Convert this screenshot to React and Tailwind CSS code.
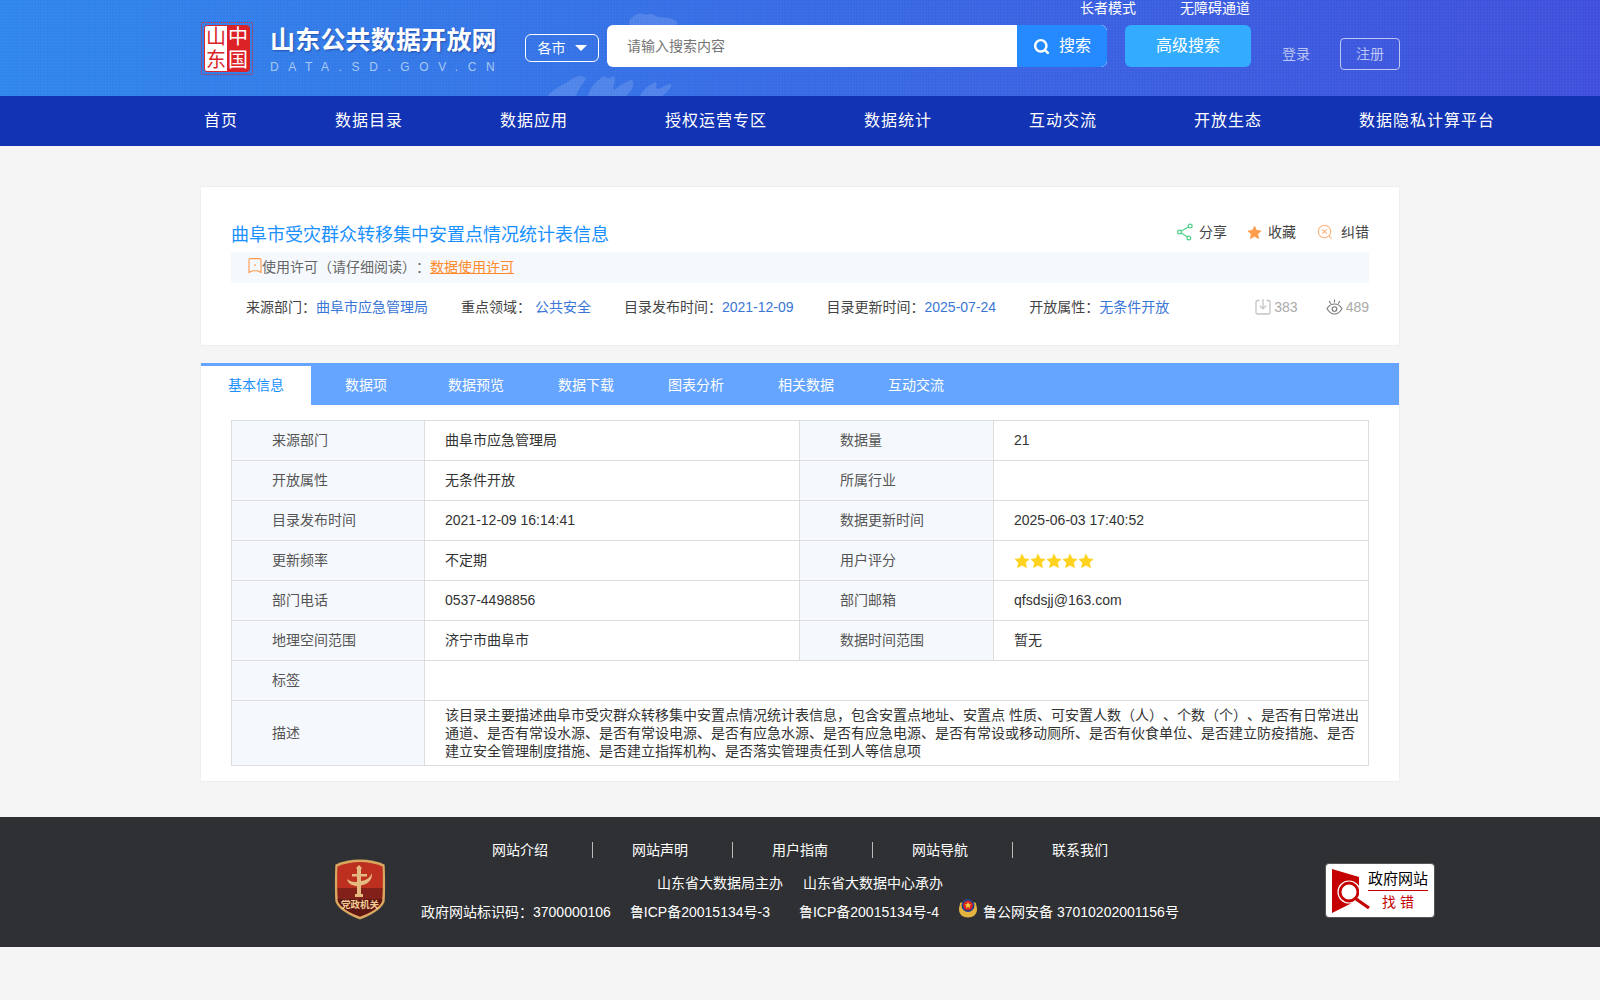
import React from "react";
import { Search } from "lucide-react";

function Caret() {
  return <span className="ml-[9px] inline-block h-0 w-0 border-x-[6px] border-t-[6px] border-x-transparent border-t-white" />;
}

function Seal() {
  return (
    <div className="relative h-[53px] w-[52px] rounded-[2px] border border-dotted border-[#d8242a] p-[2px]">
      <div className="grid h-full w-full grid-cols-2 overflow-hidden rounded-[3px] border border-[#d8242a] leading-none">
        <div className="flex flex-col items-center justify-around bg-white text-[20px] text-[#d8242a]">
          <span>山</span>
          <span>东</span>
        </div>
        <div className="flex flex-col items-center justify-around bg-[#dc2127] text-[20px] text-white">
          <span>中</span>
          <span>国</span>
        </div>
      </div>
    </div>
  );
}

function Globe() {
  return (
    <svg className="pointer-events-none absolute left-[330px] top-[8px]" width="180" height="88" viewBox="0 0 180 88" fill="#ffffff">
      <g opacity="0.13">
        <path d="M100 12c4-6 10-8 16-5 5-3 8 0 12 2 6 0 14 1 18 4 2 2 1 4 0 6H102c-3-2-4-5-2-7z" />
        <path d="M18 88c4-6 12-10 20-14 6-6 14-8 18-4-2 6-8 10-10 18z" />
        <path d="M58 88c2-10 10-16 16-20 4 4 6 2 10 0 3 6-2 10 0 14 6-4 10-8 18-10 4 6-2 12-6 16z" />
        <path d="M110 88c4-8 10-12 16-14 2 4-2 6 2 7 6-2 8-5 14-5-1 5-6 9-10 12z" />
      </g>
    </svg>
  );
}

function ShareIcon() {
  return (
    <svg width="16" height="18" viewBox="0 0 16 18" fill="none" stroke="#4fd08a" strokeWidth="1.2">
      <circle cx="13.2" cy="3" r="1.9" />
      <circle cx="2.6" cy="9" r="1.9" />
      <circle cx="11.8" cy="15" r="1.9" />
      <path d="M11.6 4 4.2 8M4.2 10l6 3.8" />
    </svg>
  );
}

function Star({ color, size }) {
  return (
    <svg width={size} height={size} viewBox="0 0 16 16" fill={color} stroke={color} strokeLinejoin="round" strokeWidth="0.8">
      <path d="M8 1.2l2.1 4.5 4.9.6-3.6 3.3 1 4.900L8 12.100l-4.400 2.400 1-4.900L1 6.300l4.900-.6z" />
    </svg>
  );
}

function ErrorIcon() {
  return (
    <svg width="16" height="16" viewBox="0 0 16 16" fill="none" stroke="#ffb37a" strokeWidth="1.1">
      <circle cx="7.5" cy="7.5" r="6.2" />
      <path d="M5.3 5.3l4.4 4.4M9.7 5.3l-4.4 4.4M12 12l2.6 2.6" />
    </svg>
  );
}

function BookmarkIcon() {
  return (
    <svg width="14" height="16" viewBox="0 0 14 16" fill="none" stroke="#ff9a4d" strokeWidth="1.1">
      <path d="M1 2a1.4 1.4 0 0 1 1.4-1.4h9.2A1.4 1.4 0 0 1 13 2v12.600l-3.400-1.800H4.400L1 14.600z" />
      <path d="M7 6v2.2" />
    </svg>
  );
}

function DownloadIcon() {
  return (
    <svg width="16" height="18" viewBox="0 0 16 18" fill="none" stroke="#c4c4c4" strokeWidth="1.3">
      <path d="M4.500 2.500H2.400A1.400 1.400 0 0 0 1 3.900v10.700A1.400 1.400 0 0 0 2.400 16h11.200a1.400 1.400 0 0 0 1.400-1.400V3.900a1.400 1.400 0 0 0-1.400-1.400h-2.100" />
      <path d="M8 1v9.500M4.800 7.600 8 10.800l3.200-3.200" />
    </svg>
  );
}

function EyeIcon() {
  return (
    <svg width="17" height="18" viewBox="0 0 17 18" fill="none" stroke="#777777" strokeWidth="1.1">
      <path d="M1 10.500C3 7.300 5.500 6 8.500 6s5.500 1.300 7.500 4.500C14 14.300 11.500 16 8.500 16S3 14.300 1 10.500z" />
      <circle cx="8.500" cy="11" r="2.300" />
      <path d="M8.500 1.500v3M3.200 3l1.600 2.800M13.800 3l-1.600 2.800" />
    </svg>
  );
}

function PartyBadge() {
  return (
    <div className="relative h-[63px] w-[52px]">
      <svg width="52" height="63" viewBox="0 0 52 63">
        <path d="M26 1.500C35 1.500 43 3 50.500 6.500 51 8 51.500 36 50.500 44 48 51 36 58 26 61.500 16 58 4 51 1.500 44 .5 36 1 8 1.500 6.500 9 3 17 1.500 26 1.500z" fill="#d9a860" />
        <path d="M26 4C34 4 42 5.500 48.500 8.500 49 12 49 36 48 43 46 49 36 55 26 58.500 16 55 6 49 4 43 3 36 3 12 3.500 8.500 10 5.500 18 4 26 4z" fill="#bd3020" />
        <path d="M3.500 30H48.500L48 43C46 49 36 55 26 58.500 16 55 6 49 4 43z" fill="#84201a" />
        <path d="M3.500 41H48.200L48 43C46 49 36 55 26 58.500 16 55 6 49 4 43z" fill="#5d1712" />
        <path d="M22 10l3-3 3 3-1 1v5h6v2.500h-6V23c5-.5 9-3 11-8 .5 7-4 11-11 12.500V36h2v3H21v-3h2V28c-4 0-9-2-10-7 3 2.500 6 3 10 3V18.500h-5V16h5v-5z" fill="#e5ba80" />
      </svg>
      <span className="absolute left-0 top-[41px] w-full whitespace-nowrap text-center text-[9.5px] font-bold leading-[12px] text-[#f1cc95]">党政机关</span>
    </div>
  );
}

function PoliceEmblem() {
  return (
    <svg width="20" height="21" viewBox="0 0 20 21">
      <path d="M10 20.500c-5 0-9-3-9-8 0-3 1-4 1-6.500l3-1c1-3.500 8-3.500 10 0l3 1c0 2.500 1 3.500 1 6.500 0 5-4 8-9 8z" fill="#e4b340" />
      <circle cx="10" cy="8.500" r="6.500" fill="#1d3d8f" />
      <circle cx="10" cy="8.500" r="4.800" fill="#d8261f" />
      <path d="M10 5l1 2.200 2.300.2-1.800 1.500.6 2.300-2.100-1.200-2.100 1.200.6-2.300-1.800-1.500 2.300-.2z" fill="#f6d24a" />
    </svg>
  );
}

function FindError() {
  return (
    <div className="flex h-[55px] w-[110px] items-center rounded-[4px] border border-[#555555] bg-white pl-[6px]">
      <svg width="38" height="44" viewBox="0 0 38 44" className="shrink-0">
        <path d="M0 0 27 8V30L18 35 0 44z" fill="#c40000" />
        <circle cx="17" cy="23" r="8.800" fill="#ffffff" stroke="#c40000" strokeWidth="2.500" />
        <circle cx="17" cy="23" r="11" fill="none" stroke="#ffffff" strokeWidth="1.200" />
        <path d="M24 30 37 39" stroke="#c40000" strokeWidth="3.200" />
      </svg>
      <div className="-ml-[2px] flex w-[60px] flex-col items-center">
        <div className="w-full whitespace-nowrap border-b border-[#c40000] pb-[1px] text-center text-[15px] leading-[20px] text-black">政府网站</div>
        <div className="mt-[1px] pl-[4px] text-[14px] leading-[20px] tracking-[4px] text-[#c40000]">找错</div>
      </div>
    </div>
  );
}

const navItems = ["首页", "数据目录", "数据应用", "授权运营专区", "数据统计", "互动交流", "开放生态", "数据隐私计算平台"];
const tabs = ["基本信息", "数据项", "数据预览", "数据下载", "图表分析", "相关数据", "互动交流"];
const footLinks = [
  ["网站介绍", "w-[141px] border-r border-[#bbbbbb] pl-[40px]"],
  ["网站声明", "w-[140px] border-r border-[#bbbbbb] pl-[39px]"],
  ["用户指南", "w-[140px] border-r border-[#bbbbbb] pl-[39px]"],
  ["网站导航", "w-[140px] border-r border-[#bbbbbb] pl-[39px]"],
  ["联系我们", "w-[135px] pl-[39px]"],
];

function Label({ children }) {
  return <td className="border border-[#dddddd] bg-[#f5f9fd] pl-[40px] text-[14px] text-[#555555]">{children}</td>;
}
function Value({ children, colSpan }) {
  return <td colSpan={colSpan} className="border border-[#dddddd] pl-[20px] text-[14px] text-[#333333]">{children}</td>;
}

export default function App() {
  return (
    <div className="min-h-[1000px] bg-[#f5f5f5] font-['Liberation_Sans','Noto_Sans_CJK_SC',sans-serif] [text-spacing-trim:space-all]">
      <header className="h-[96px] bg-[repeating-linear-gradient(0deg,rgba(255,255,255,0.025)_0_1px,transparent_1px_3px),repeating-linear-gradient(90deg,rgba(255,255,255,0.025)_0_1px,transparent_1px_3px),linear-gradient(90deg,#2f86ec,#3f4fdc)]">
        <div className="relative mx-auto flex w-[1200px]">
          <Globe />
          <div className="relative flex w-[325px] pt-[22px] pl-[1px]">
            <Seal />
            <div className="ml-[17px]">
              <div className="whitespace-nowrap text-[25px] font-bold leading-[36px] tracking-[0.2px] text-white [text-shadow:1px_1px_2px_rgba(0,0,60,0.35)]">山东公共数据开放网</div>
              <div className="mt-[2px] whitespace-nowrap text-[12px] leading-[14px] tracking-[9.6px] text-[#a9c8f2]">DATA.SD.GOV.CN</div>
            </div>
          </div>
          <div className="relative flex-1">
            <div className="flex h-[25px] justify-end gap-[44px] pr-[150px] text-[14px] leading-[16px] text-white">
              <span>长者模式</span>
              <span>无障碍通道</span>
            </div>
            <div className="flex items-start">
              <div className="mt-[9px] flex h-[28px] w-[74px] items-center justify-center rounded-[6px] border border-white text-[14px] text-white">
                各市
                <Caret />
              </div>
              <div className="ml-[8px] flex h-[42px] w-[500px] overflow-hidden rounded-[6px] bg-white">
                <div className="flex-1 pl-[20px] text-[14px] leading-[42px] text-[#757575]">请输入搜索内容</div>
                <div className="flex w-[90px] items-center justify-center rounded-r-[6px] bg-[#2589ff] text-[16px] text-white">
                  <Search size={17} strokeWidth={3.5} />
                  <span className="ml-[9px]">搜索</span>
                </div>
              </div>
              <div className="ml-[18px] flex h-[42px] w-[126px] items-center justify-center rounded-[6px] bg-[#33acff] text-[16px] text-white">高级搜索</div>
              <div className="ml-[31px] mt-[20px] text-[14px] leading-[18px] text-[#bcc6f2]">登录</div>
              <div className="ml-[30px] mt-[13px] flex h-[32px] w-[60px] items-center justify-center rounded-[4px] border border-[#bcc6f2] text-[14px] text-[#bcc6f2]">注册</div>
            </div>
          </div>
        </div>
      </header>

      <nav className="h-[50px] bg-[#1233b3]">
        <div className="mx-auto flex w-[1200px] gap-[97px] pl-[4px] text-[16px] leading-[50px] tracking-[1px] text-white">
          {navItems.map((n) => (
            <span key={n} className="whitespace-nowrap">{n}</span>
          ))}
        </div>
      </nav>

      <main className="mx-auto w-[1200px] pt-[40px]">
        <section className="h-[160px] border border-[#eeeeee] bg-white px-[30px] pt-[34px]">
          <div className="flex items-start justify-between">
            <h1 className="pt-[1px] text-[18px] font-normal leading-[27px] text-[#1890ff]">曲阜市受灾群众转移集中安置点情况统计表信息</h1>
            <div className="flex items-center text-[14px] leading-[22px] text-[#444444]">
              <ShareIcon />
              <span className="ml-[6px]">分享</span>
              <span className="ml-[20px]"><Star color="#ff9d4d" size={15} /></span>
              <span className="ml-[6px]">收藏</span>
              <span className="ml-[21px]"><ErrorIcon /></span>
              <span className="ml-[8px]">纠错</span>
            </div>
          </div>
          <div className="mt-[3px] flex h-[31px] items-center bg-[#f5f9fd] pl-[17px] text-[14px] text-[#666666]">
            <span className="-mt-[3px]"><BookmarkIcon /></span>
            <span>使用许可（请仔细阅读）：</span>
            <a className="text-[#ff8a2b] underline">数据使用许可</a>
          </div>
          <div className="mt-[14px] flex h-[20px] items-center gap-[33px] pl-[15px] text-[14px] text-[#444444]">
            <span>来源部门：<span className="text-[#3a76d6]">曲阜市应急管理局</span></span>
            <span>重点领域： <span className="text-[#3a76d6]">公共安全</span></span>
            <span>目录发布时间：<span className="text-[#3a76d6]">2021-12-09</span></span>
            <span>目录更新时间：<span className="text-[#3a76d6]">2025-07-24</span></span>
            <span>开放属性：<span className="text-[#3a76d6]">无条件开放</span></span>
            <div className="ml-auto flex items-center text-[#aaaaaa]">
              <DownloadIcon />
              <span className="ml-[3px]">383</span>
              <span className="ml-[28px]"><EyeIcon /></span>
              <span className="ml-[3px]">489</span>
            </div>
          </div>
        </section>

        <section className="mt-[17px] h-[419px] border-x border-b border-[#eeeeee] bg-white">
          <div className="flex h-[42px] bg-[#66a5ff] text-[14px] text-white">
            {tabs.map((t, i) =>
              i === 0 ? (
                <div key={t} className="mt-[3px] flex h-[39px] w-[110px] items-center justify-center bg-white text-[#1890ff]">{t}</div>
              ) : (
                <div key={t} className="flex h-[42px] w-[110px] items-center justify-center pt-[2px]">{t}</div>
              )
            )}
          </div>
          <div className="mt-[15px] px-[30px]">
            <table className="w-full table-fixed border-collapse">
              <colgroup>
                <col className="w-[193px]" />
                <col className="w-[375px]" />
                <col className="w-[194px]" />
                <col className="w-[375px]" />
              </colgroup>
              <tbody>
                <tr className="h-[40px]"><Label>来源部门</Label><Value>曲阜市应急管理局</Value><Label>数据量</Label><Value>21</Value></tr>
                <tr className="h-[40px]"><Label>开放属性</Label><Value>无条件开放</Value><Label>所属行业</Label><Value></Value></tr>
                <tr className="h-[40px]"><Label>目录发布时间</Label><Value>2021-12-09 16:14:41</Value><Label>数据更新时间</Label><Value>2025-06-03 17:40:52</Value></tr>
                <tr className="h-[40px]">
                  <Label>更新频率</Label><Value>不定期</Value><Label>用户评分</Label>
                  <Value>
                    <div className="flex">
                      {[0, 1, 2, 3, 4].map((i) => (
                        <Star key={i} color="#ffd21e" size={16} />
                      ))}
                    </div>
                  </Value>
                </tr>
                <tr className="h-[40px]"><Label>部门电话</Label><Value>0537-4498856</Value><Label>部门邮箱</Label><Value>qfsdsjj@163.com</Value></tr>
                <tr className="h-[40px]"><Label>地理空间范围</Label><Value>济宁市曲阜市</Value><Label>数据时间范围</Label><Value>暂无</Value></tr>
                <tr className="h-[40px]"><Label>标签</Label><Value colSpan={3}></Value></tr>
                <tr className="h-[65px]">
                  <Label>描述</Label>
                  <Value colSpan={3}>
                    <div className="pr-[8px] leading-[18px]">该目录主要描述曲阜市受灾群众转移集中安置点情况统计表信息，包含安置点地址、安置点 性质、可安置人数（人）、个数（个）、是否有日常进出通道、是否有常设水源、是否有常设电源、是否有应急水源、是否有应急电源、是否有常设或移动厕所、是否有伙食单位、是否建立防疫措施、是否建立安全管理制度措施、是否建立指挥机构、是否落实管理责任到人等信息项</div>
                  </Value>
                </tr>
              </tbody>
            </table>
          </div>
        </section>
      </main>

      <footer className="mt-[35px] flex h-[130px] bg-[#2e3033] pl-[334px] text-[14px] text-white">
        <div className="mt-[41px]"><PartyBadge /></div>
        <div className="ml-[34px] w-[760px]">
          <div className="mt-[25px] flex h-[16px] items-center justify-center leading-[16px]">
            {footLinks.map(([l, c]) => (
              <span key={l} className={c}>{l}</span>
            ))}
          </div>
          <div className="mt-[15px] flex h-[20px] items-center justify-center gap-[20px]">
            <span>山东省大数据局主办</span>
            <span>山东省大数据中心承办</span>
          </div>
          <div className="mt-[9px] flex h-[20px] items-center whitespace-nowrap pl-[1px]">
            <span>政府网站标识码：3700000106</span>
            <span className="ml-[19px]">鲁ICP备20015134号-3</span>
            <span className="ml-[29px]">鲁ICP备20015134号-4</span>
            <span className="ml-[19px] -mt-[10px]"><PoliceEmblem /></span>
            <span className="ml-[5px]">鲁公网安备 37010202001156号</span>
          </div>
        </div>
        <div className="ml-[145px] mt-[46px]"><FindError /></div>
      </footer>
    </div>
  );
}
